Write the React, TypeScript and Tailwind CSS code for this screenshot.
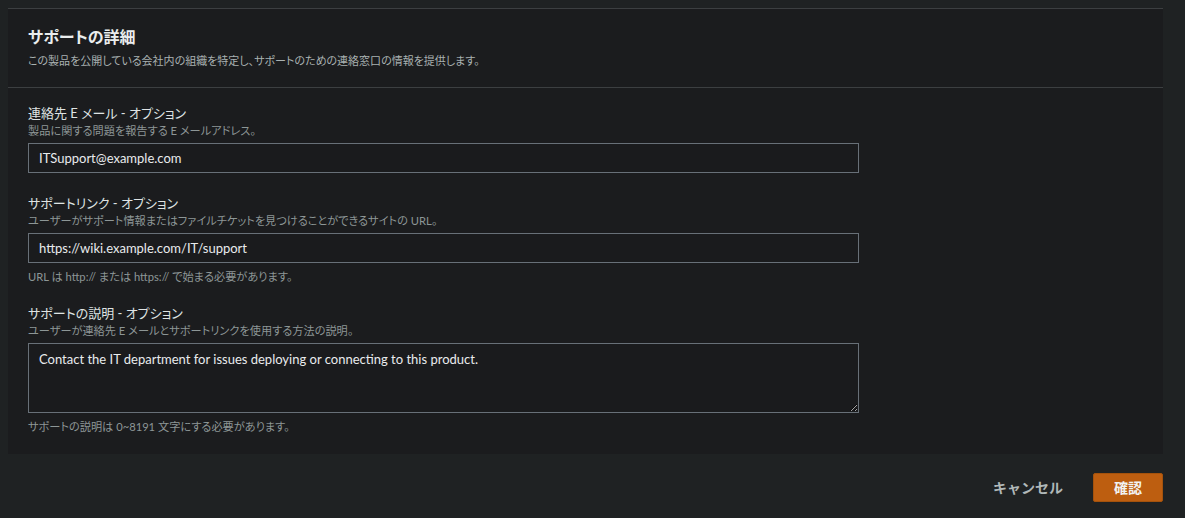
import React from "react";

const font = {
    fontFamily: 'Lato, "Noto Sans CJK JP", sans-serif',
    fontFeatureSettings: '"palt"',
};

function Field({
    label,
    desc,
    value,
    help,
    multiline,
    className,
}: {
    label: string;
    desc: string;
    value: string;
    help?: string;
    multiline?: boolean;
    className?: string;
}) {
    return (
        <div className={"flex flex-col " + (className || "")}>
            <div className="text-[13px] leading-[20px] text-[#dfe3e3]">{label}</div>
            <div className="text-[11.2px] leading-[16px] text-[#8d9696]">{desc}</div>
            {multiline ? (
                <textarea
                    readOnly
                    value={value}
                    className="mt-[4px] h-[70px] w-[831px] border border-[#687078] bg-[#1a1b1d] px-[10px] py-[5px] text-[13px] leading-[20px] text-[#e9ebed] outline-none"
                    style={font}
                />
            ) : (
                <input
                    readOnly
                    value={value}
                    className="mt-[4px] h-[30px] w-[831px] border border-[#687078] bg-[#1a1b1d] px-[10px] text-[13px] text-[#e9ebed] outline-none"
                    style={font}
                />
            )}
            {help && <div className="mt-[6px] text-[11.2px] leading-[16px] text-[#8d9696]">{help}</div>}
        </div>
    );
}

export default function App() {
    return (
        <div className="min-h-[518px] w-[1185px] bg-[#1f2223] pl-[8px] pr-[22px] pt-[8px]" style={font}>
            {/* Panel */}
            <div className="border-t border-[#3c3f41] bg-[#1b1c1e]">
                <div className="border-b border-[#3c3f41] px-[20px] pb-[18px] pt-[15px]">
                    <h2 className="text-[16px] font-bold leading-[26px] text-[#eaeded]">サポートの詳細</h2>
                    <p className="mt-[3px] text-[11px] leading-[16px] text-[#a9b1b1]">
                        この製品を公開している会社内の組織を特定し、サポートのための連絡窓口の情報を提供します。
                    </p>
                </div>
                <div className="flex flex-col px-[20px] pb-[19px] pt-[15px]">
                    <Field
                        label="連絡先 E メール - オプション"
                        desc="製品に関する問題を報告する E メールアドレス。"
                        value="ITSupport@example.com"
                    />
                    <Field
                        className="mt-[20px]"
                        label="サポートリンク - オプション"
                        desc="ユーザーがサポート情報またはファイルチケットを見つけることができるサイトの URL。"
                        value="https://wiki.example.com/IT/support"
                        help="URL は http:// または https:// で始まる必要があります。"
                    />
                    <Field
                        className="mt-[18px]"
                        label="サポートの説明 - オプション"
                        desc="ユーザーが連絡先 E メールとサポートリンクを使用する方法の説明。"
                        value="Contact the IT department for issues deploying or connecting to this product."
                        help="サポートの説明は 0~8191 文字にする必要があります。"
                        multiline
                    />
                </div>
            </div>

            {/* Actions */}
            <div className="flex items-center justify-end gap-[30px] pt-[19px] [font-feature-settings:normal]">
                <button className="text-[14px] font-bold text-[#b0b8b8]">キャンセル</button>
                <button className="h-[29px] w-[70px] rounded-[2px] border border-[#a4520c] bg-[#bd5e10] text-[14px] font-bold text-[#f2f3f3]">
                    確認
                </button>
            </div>
        </div>
    );
}
